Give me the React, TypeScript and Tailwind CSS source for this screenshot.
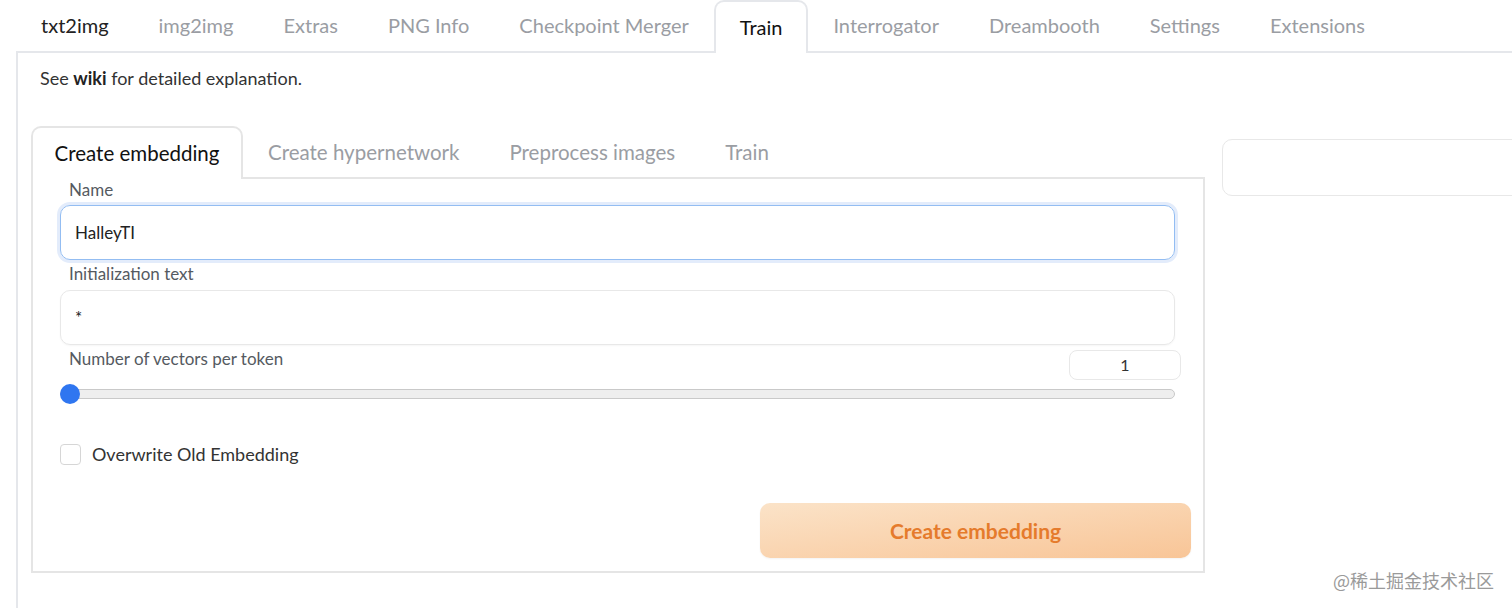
import React from 'react';

const topTabs = ['txt2img', 'img2img', 'Extras', 'PNG Info', 'Checkpoint Merger', 'Train', 'Interrogator', 'Dreambooth', 'Settings', 'Extensions'];
const subTabs = ['Create embedding', 'Create hypernetwork', 'Preprocess images', 'Train'];

function Label({ children }: { children: React.ReactNode }) {
    return <div className="pl-[9px] text-[17px] leading-[20px] text-[#555a61]">{children}</div>;
}

export default function App() {
    return (
        <div className="w-[1512px] h-[608px] overflow-hidden bg-white relative" style={{ fontFamily: 'Lato, "Noto Sans", sans-serif' }}>
            {/* top tab bar */}
            <div className="flex items-end h-[53px] ml-[16px] border-b-2 border-[#e5e7eb]">
                {topTabs.map((t, i) => {
                    const active = t === 'Train' && i === 5;
                    return (
                        <div
                            key={t + i}
                            className={
                                active
                                    ? 'h-[53px] -mb-[2px] px-[24px] flex items-center text-[20px] text-[#111] bg-white border-2 border-b-0 border-[#e5e7eb] rounded-t-[10px]'
                                    : 'h-[51px] px-[25px] flex items-center text-[20px] ' + (i === 0 ? 'text-[#222]' : 'text-[#9a9da3]')
                            }
                        >
                            <span className="-mt-[1px]">{t}</span>
                        </div>
                    );
                })}
            </div>

            {/* tab content */}
            <div className="ml-[16px] border-l-2 border-[#e5e7eb] h-[560px] pl-[13px]">
                <div className="pl-[9px] pt-[14px] text-[18px] leading-[22px] text-[#333]">
                    See <b className="font-bold text-[#222]">wiki</b> for detailed explanation.
                </div>

                <div className="flex gap-[17px] mt-[38px]">
                    {/* left column */}
                    <div className="w-[1174px] shrink-0">
                        <div className="flex items-end h-[52px] border-b-2 border-[#e5e5e5]">
                            {subTabs.map((t, i) =>
                                i === 0 ? (
                                    <div key={t} className="h-[53px] -mb-[2px] w-[212px] flex items-center justify-center text-[20.5px] text-[#111] bg-white border-2 border-b-0 border-[#e5e5e5] rounded-t-[10px]">
                                        {t}
                                    </div>
                                ) : (
                                    <div key={t} className="h-[50px] px-[25px] flex items-center text-[20.5px] text-[#9a9da3]">
                                        {t}
                                    </div>
                                )
                            )}
                        </div>
                        <div className="border-2 border-t-0 border-[#e5e5e5] h-[394px] pl-[27px] pr-[12px] pt-[1px]">
                            <Label>Name</Label>
                            <div className="mt-[5px] w-[1115px] h-[55px] rounded-[10px] border border-[#93bdf2] shadow-[0_0_0_3px_#e3ecfb] flex items-center pl-[14px] text-[17px] text-[#222]">
                                HalleyTI
                            </div>
                            <div className="mt-[4px]">
                                <Label>Initialization text</Label>
                            </div>
                            <div className="mt-[6px] w-[1115px] h-[55px] rounded-[10px] border border-[#e8e8e8] shadow-[0_1px_2px_rgba(0,0,0,0.04)] flex items-start pt-[14px] pl-[14px] text-[17px] text-[#222]">
                                *
                            </div>
                            <div className="flex items-start justify-between mt-[5px] h-[30px] pr-[10px]">
                                <div className="-mt-[1px]">
                                    <Label>Number of vectors per token</Label>
                                </div>
                                <div className="w-[112px] h-[30px] rounded-[8px] border border-[#e8e8e8] flex items-center justify-center text-[16px] text-[#333]">
                                    1
                                </div>
                            </div>
                            <div className="relative mt-[4px] w-[1115px] h-[20px] flex items-center">
                                <div className="w-full h-[10px] rounded-full bg-[#eeeeee] border border-[#c9c9c9]" />
                                <div className="absolute left-0 top-0 w-[20px] h-[20px] rounded-full bg-[#2f76f0]" />
                            </div>
                            <div className="flex items-center mt-[37px]">
                                <div className="w-[21px] h-[21px] rounded-[4px] border border-[#d6d6d6] bg-white" />
                                <span className="ml-[11px] text-[18px] text-[#333]">Overwrite Old Embedding</span>
                            </div>
                            <div className="flex justify-end mt-[35px]">
                                <button className="w-[431px] h-[55px] rounded-[10px] bg-gradient-to-br from-[#fbe3c8] to-[#f8c597] text-[21px] font-bold text-[#e57b2c] shadow-[0_1px_2px_rgba(0,0,0,0.05)]">
                                    Create embedding
                                </button>
                            </div>
                        </div>
                    </div>

                    {/* right column */}
                    <div className="w-[400px] shrink-0 pt-[12px]">
                        <div className="h-[57px] rounded-[10px] border border-[#e8e8e8]" />
                    </div>
                </div>
            </div>

            <div className="absolute left-[1333px] top-[567px] text-[18px] text-[#9a9a9a]" style={{ fontFamily: '"Noto Sans CJK SC", sans-serif' }}>
                @稀土掘金技术社区
            </div>
        </div>
    );
}
